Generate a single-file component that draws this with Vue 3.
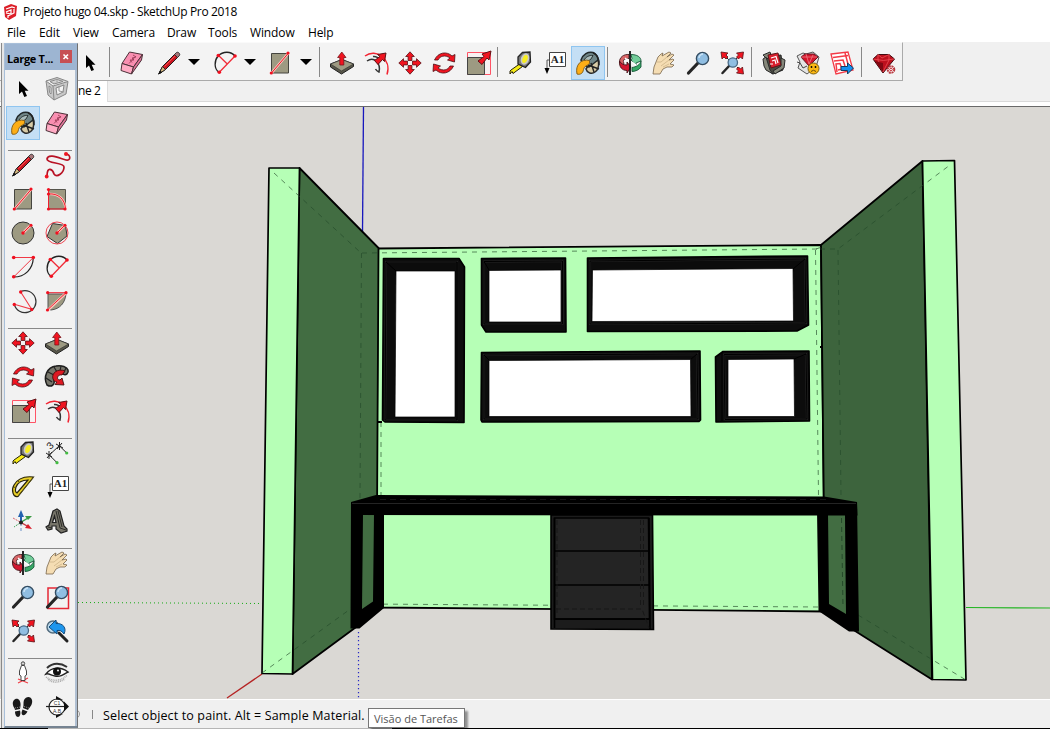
<script setup>
const menus = ['File', 'Edit', 'View', 'Camera', 'Draw', 'Tools', 'Window', 'Help']

const toolbar = [
  'pointer', '|', 'eraser', 'pencil', 'v1', 'arc2', 'v2', 'rect', 'v3', '|',
  'pushpull', 'offset', 'move', 'rotate', 'scale', '|',
  'tape', 'text', 'paint', '|',
  'orbit', 'hand', 'zoom', 'extents', '|',
  'warehouse', 'extension', 'layout', '|', 'ruby'
]

const groups = [
  ['pointer', 'component', 'paint', 'eraser'],
  ['pencil', 'freehand', 'rect', 'rotrect', 'circle', 'polygon', 'arc', 'arc2', 'arc3', 'pie'],
  ['move', 'pushpull', 'rotate', 'follow', 'scale', 'offset'],
  ['tape', 'dimension', 'protractor', 'text', 'axes', 'text3d'],
  ['orbit', 'hand', 'zoom', 'zoomwin', 'extents', 'previous'],
  ['camera', 'eye', 'feet', 'section']
]

// Lettering that sits on top of an icon
const labels = { text: 'A1', dimension: '3' }

const shelves = [
  { outer: '383.500,258.500 459,258.500 464.500,267 464,422.500 385,422 382.500,420', frame: '386,262 457,262 457,420 385,420', edge: 'M386 262L396 271M457 262V420', white: '396,271 455,271 455,417 395,417' },
  { outer: '481.500,258.500 565.500,258 566,332 486,332 481.500,325', frame: '484,261.500 562.500,261 562.500,324 484,324', edge: 'M484 261.500L489 270', white: '489,270.500 561,270 561,322 489,322' },
  { outer: '587.500,258 807.500,256 808.500,325 797,331 587.500,331.500', frame: '590,261 805,259 806,323 590,324', edge: 'M805 259L793 269', white: '592.500,270 793,268.500 793.500,321 592,321.500' },
  { outer: '481.500,352.500 700,351 700.500,420 699,421.500 482,422 481,420', frame: '484,355 697,354 698,419 484,419', edge: 'M484 355L489 360M697 354L690 360', white: '489,360.500 690.500,359.500 691,416.500 489,416.500' },
  { outer: '715.500,357 723,351.500 809,351 809.500,421 716,422', frame: '724,354.500 806,354 807,419 725,419.500', edge: 'M806 354L794 359M722 352V421', white: '728,359.500 794,359 794.500,416.500 728,416.500' }
]
</script>

<template>
  <div class="app">
    <svg class="defs" width="0" height="0">
      <symbol id="pointer" viewBox="0 0 34 34"><path d="M13 9V22L16 19.500L18.300 25L21 24L18.700 18.700H22.500Z" fill="#000" /></symbol>
      <symbol id="component" viewBox="0 0 34 34">
        <path d="M6 9L17 5.500L28 9.500L26 22L14 28L8 23Z" fill="#c9c9c9" stroke="#888" />
        <path d="M6 9L13 14L28 9.500M13 14L14 28M10 9.500L17 7.500L23 9.500L14 12ZM16 16L24 13L23 20L17 23ZM9 14L11 15.500V22L9.500 20.500Z" fill="#f4f4f4" stroke="#888" />
        <path d="M19 14V19L24 20M17 7V10" fill="none" stroke="#999" />
      </symbol>
      <symbol id="paint" viewBox="0 0 34 34">
        <path d="M17 20L26 13L27.500 16C28 20 27 24 24 26C21 28.500 16 27 15 23Z" fill="#d8cba6" stroke="#2b2b2b" stroke-width="1.500" />
        <path d="M10 14C12 8 17 5.500 22 6.500C25 8 27 11 27 14L18 21C14 20 11 18 10 14Z" fill="#6f8587" stroke="#20282a" stroke-width="1.500" />
        <path d="M13 14C15 11 18 9 22 9.500L20 13L16 16Z" fill="#a9bcbc" stroke="#2b3535" />
        <path d="M22 7C26 8 29 14 28 19M17 19L28 23M20 17L23 26" fill="none" stroke="#222" stroke-width="1.400" />
        <path d="M18.500 14.500C10 12.500 4 19 6 28C9 29 12 27.500 12.500 23.500C13 20 16 20 18.500 17.500Z" fill="#fdae16" stroke="#8a6219" />
      </symbol>
      <symbol id="eraser" viewBox="0 0 34 34">
        <g stroke="#4b3038" stroke-linejoin="round">
          <path d="M14.500 6L27.500 8.500L18.500 21L7 17.500Z" fill="#f98fb1" />
          <path d="M7 17.500L18.500 21L16.500 28L6 24.500Z" fill="#ffabc4" />
          <path d="M27.500 8.500L26.500 14L16.500 28L18.500 21Z" fill="#e07599" />
        </g>
        <path d="M21 10L14 17.500M18 9L21 11L17 12L19 14L15 14L17 16.500" stroke="#9f3f5b" stroke-width=".9" fill="none" />
      </symbol>
      <symbol id="pencil" viewBox="0 0 34 34">
        <path d="M10.500 20.500L23.500 7.500L26.500 10.500L13.500 23.500L6.700 28Z" fill="#cc1520" stroke="#1e1e1e" />
        <path d="M10.500 20.500L13.500 23.500L6.700 28Z" fill="#d2b67f" stroke="#222" stroke-width=".9" />
        <path d="M6.500 28.300L8 24.500L10.300 26.500Z" fill="#111" />
        <path d="M22.500 8.500L24.500 6.500C26 5.500 28.500 7.500 27.500 9.500L25.500 11.500Z" fill="#a7767a" stroke="#333" />
        <path d="M12.500 20.500L23 10" stroke="#f8504e" />
      </symbol>
      <symbol id="freehand" viewBox="0 0 34 34">
        <path d="M26 6C31 7 31 13 26 12C19 10 8 5 7 11C7 16 24 14 24 19C24 25 17 30 14 26C13 22 7 17 7 28" fill="none" stroke="#b81224" stroke-width="1.700" />
        <circle cx="26" cy="6" r="2" fill="#f01520" /><circle cx="6.700" cy="28.500" r="1.900" fill="#f01520" />
      </symbol>
      <symbol id="rect" viewBox="0 0 34 34">
        <path d="M8.500 7.500H25.500V27H8.500Z" fill="#9d9a82" stroke="#45453f" />
        <path d="M8.500 27L25.500 7" stroke="#ffc5bd" stroke-width="2.600" /><path d="M8.500 27L25.500 7" stroke="#e71928" />
        <circle cx="25" cy="7" r="1.600" fill="#f01020" /><circle cx="8.300" cy="27" r="1.600" fill="#f01020" />
      </symbol>
      <symbol id="rotrect" viewBox="0 0 34 34">
        <path d="M8.500 7.500H25.500V27H8.500Z" fill="#9d9a82" stroke="#55554c" />
        <path d="M8.500 12C18 11 25 17 25.500 27" fill="none" stroke="#ffc5bd" stroke-width="2.500" />
        <path d="M8.500 7V27H25.500M8.500 12C18 11 25 17 25.500 27" fill="none" stroke="#ed2030" />
        <g fill="#f01020"><circle cx="8.500" cy="7.500" r="1.600" /><circle cx="8.500" cy="12" r="1.600" /><circle cx="8.500" cy="27" r="1.600" /><circle cx="25" cy="27" r="1.600" /></g>
      </symbol>
      <symbol id="circle" viewBox="0 0 34 34">
        <circle cx="17" cy="17" r="11" fill="#9d9a82" stroke="#333" /><path d="M17 17L25 9" stroke="#ffb7b0" stroke-width="2.600" /><path d="M17 17L25 9" stroke="#ef1a28" />
        <circle cx="17" cy="17" r="1.700" fill="#f01020" /><circle cx="25" cy="9.300" r="1.500" fill="#f01020" />
      </symbol>
      <symbol id="polygon" viewBox="0 0 34 34">
        <path d="M12.500 7.500L25.500 9.500L27 20L17.500 27.500L7 20.500Z" fill="#9d9a82" stroke="#333" /><circle cx="17" cy="17" r="11" fill="none" stroke="#ef4450" /><path d="M17 17L25 9" stroke="#ffb7b0" stroke-width="2.600" /><path d="M17 17L25 9" stroke="#ef1a28" />
        <circle cx="17" cy="17" r="1.700" fill="#f01020" /><circle cx="25" cy="9.300" r="1.500" fill="#f01020" />
      </symbol>
      <symbol id="arc" viewBox="0 0 34 34">
        <path d="M27.300 7.500C27 19 19 27 7.700 27" fill="none" stroke="#222" stroke-width="1.200" /><path d="M7.700 7.500H27.300L7.700 27" fill="none" stroke="#f03945" />
        <g fill="#f01020"><circle cx="7.700" cy="7.500" r="1.800" /><circle cx="27.300" cy="7.500" r="1.800" /><circle cx="7.700" cy="26.700" r="1.800" /></g>
      </symbol>
      <symbol id="arc2" viewBox="0 0 34 34">
        <path d="M11 26.300C6 23 6 15 10 10C15 5 23 5 27 10" fill="none" stroke="#222" stroke-width="1.300" /><path d="M27 10L11.300 26.300M10.300 9.300L19.300 18" stroke="#f02c38" stroke-width="1.300" />
        <g fill="#f01020"><circle cx="10.300" cy="9.500" r="1.800" /><circle cx="27" cy="10" r="1.800" /><circle cx="11.300" cy="26.300" r="1.800" /></g>
      </symbol>
      <symbol id="arc3" viewBox="0 0 34 34">
        <path d="M14.700 7.500A11 11 0 1 1 8.300 20.300" fill="none" stroke="#333" stroke-width="1.200" /><path d="M14.700 8L25.700 25.300L8.300 20.300" fill="none" stroke="#f03945" stroke-width="1.100" />
        <g fill="#f01020"><circle cx="14.700" cy="8" r="1.700" /><circle cx="8.300" cy="20.500" r="1.700" /><circle cx="25.700" cy="25.500" r="1.700" /></g>
      </symbol>
      <symbol id="pie" viewBox="0 0 34 34">
        <path d="M8 10H26C25 19 20 25 11 26L8 25Z" fill="#9d9a82" stroke="#555" /><path d="M26 9L8 26" stroke="#ffc5bd" stroke-width="2.600" /><path d="M7.700 8.700H26L7.300 26" fill="none" stroke="#ed2030" />
        <g fill="#f01020"><circle cx="7.700" cy="8.700" r="1.600" /><circle cx="26" cy="8.700" r="1.600" /><circle cx="7.500" cy="26" r="1.600" /></g>
      </symbol>
      <symbol id="move" viewBox="0 0 34 34">
        <g fill="#f01420" stroke="#5b1116" stroke-width=".8">
          <path id="mv" d="M17 5.800L21.300 10.500H18.900V14.500H15.100V10.500H12.700Z" /><use href="#mv" transform="rotate(90 17 17)" /><use href="#mv" transform="rotate(180 17 17)" /><use href="#mv" transform="rotate(270 17 17)" />
        </g>
      </symbol>
      <symbol id="pushpull" viewBox="0 0 34 34">
        <path d="M5.500 18L17 13.500L28.500 18V20.500L16.500 28L5.500 21Z" fill="#58574a" stroke="#202020" /><path d="M5.500 18L17 13.500L28.500 18L16.500 25Z" fill="#9d9a82" stroke="#333" stroke-width=".7" />
        <path d="M16.800 6L21 11.500H18.800V19H14.800V11.500H12.600Z" fill="#f01420" stroke="#79151b" stroke-width=".8" />
      </symbol>
      <symbol id="rotate" viewBox="0 0 34 34">
        <g fill="#f01420" stroke="#4e1015" stroke-width=".8">
          <path id="ro" d="M7.500 14C11 6 20 5 25 10L28 8.500L27.500 16L20.500 14L23 12C18 8.500 13 10 11 14Z" /><use href="#ro" transform="rotate(180 17 17)" />
        </g>
      </symbol>
      <symbol id="follow" viewBox="0 0 34 34">
        <path d="M7 25C3 17 7 7 16 6C22 5 27 7 28 10C29 13 26 16 23 14C17 11 13 15 14 20C15 24 12 28 7 25Z" fill="#77766b" stroke="#1d1d1d" stroke-width="1.500" />
        <path d="M6 18L12 22M8 12L14 15M14 7L17 12M21 6L20 11M26 8L23 14" stroke="#222" stroke-width="1.200" />
        <path d="M25 11C18 8 11 13 13 19C14 21 15 22 17 22L15 24.500L24 25L22 18L20 20C16 20 17 14 22 15Z" fill="#df1923" stroke="#411" stroke-width=".9" />
      </symbol>
      <symbol id="scale" viewBox="0 0 34 34">
        <path d="M6.500 6.500H29.500V28.500H6.500Z" fill="#f8f1f1" stroke="#ff5365" /><path d="M6.500 11.500H23.500V28.500H6.500Z" fill="#9d9a82" stroke="#444" />
        <path d="M17 15L23 10.500L21 8L30 5L28 14L26 12L21 18.500Z" fill="#f01420" stroke="#611115" />
      </symbol>
      <symbol id="offset" viewBox="0 0 34 34">
        <path d="M6 10C17 2 33 13 28 28.500" fill="none" stroke="#f22432" stroke-width="1.500" /><path d="M8 15C15 10 22 17 20 26C18 25 17 24 16.500 23M14 10.500C17 10 20 12 21 14" fill="none" stroke="#333" stroke-width="1.500" />
        <path d="M15.500 14.500L21 10.500L18.500 8.500L27 7L25.500 15.500L23.500 13.500L19 18.500Z" fill="#f01420" stroke="#611115" />
      </symbol>
      <symbol id="tape" viewBox="0 0 34 34">
        <path d="M8 24L16.500 18L19.500 20.500L10 27.500L9 25.500L7 28V25Z" fill="#f9ed16" stroke="#26230a" /><path d="M15 11L19.500 6.500L27 6L27.500 16L22.500 21.500L15 18Z" fill="#777" stroke="#222" stroke-width="1.300" />
        <ellipse cx="22" cy="13" rx="3.300" ry="5" fill="#f7ed20" stroke="#c8c8c8" stroke-width="1.600" transform="rotate(20 22 13)" />
      </symbol>
      <symbol id="dimension" viewBox="0 0 34 34">
        <path d="M9.300 19L19.300 9.700L26.700 17M9.300 19L17 26.700M6 17L12 21M7 22L12 16M9 15V23M16 8L23 12M17 13L22 7M19.500 6V14" fill="none" stroke="#222" />
        <circle cx="26.700" cy="17" r="1.600" fill="#43bd42" /><circle cx="17" cy="26.700" r="1.600" fill="#43bd42" />
      </symbol>
      <symbol id="protractor" viewBox="0 0 34 34">
        <path fill-rule="evenodd" d="M27.500 7L12 26.500C7 28 5 20 8 15C12 8 19 6 27.500 7ZM22 10C16 10 12 12 10 17C9 20 9 22 11 23Z" fill="#e8cf27" stroke="#28230b" stroke-width="1.200" />
        <path d="M27 8L12 26M8 17L10 18M12 11L14 13" stroke="#5d5312" />
      </symbol>
      <symbol id="text" viewBox="0 0 34 34">
        <path d="M12.500 6.500H28.500V20.500H12.500Z" fill="#fff" stroke="#444" /><path d="M12 14H10V24" fill="none" stroke="#555" /><path d="M7.500 22H12.500L10 28Z" fill="#000" />
      </symbol>
      <symbol id="axes" viewBox="0 0 34 34">
        <path d="M14.700 18.300L22 14" stroke="#39a34a" stroke-width="1.400" /><path d="M26 12L19 12L22 16Z" fill="#3b9a44" /><path d="M14.700 18.300L22 22.500" stroke="#c83b43" stroke-width="1.400" /><path d="M26 25L19 24L22 20Z" fill="#d91e2b" /><path d="M15 18V9" stroke="#2362af" stroke-width="2" /><path d="M15 6L12 13H18Z" fill="#2362af" />
        <path d="M14 18L7 14" stroke="#d85b65" stroke-dasharray="2 1" /><path d="M14 19L8 23" stroke="#44a55d" stroke-dasharray="2 1" /><path d="M15 19V28" stroke="#6a91c8" stroke-dasharray="3 2" /><circle cx="15" cy="18.500" r="2" fill="#222" />
      </symbol>
      <symbol id="text3d" viewBox="0 0 34 34">
        <path fill-rule="evenodd" d="M13 7L17 5L20 7L24 22L27 25V27L21 29L16 25V22H12V25L8 26L6 23L9 21ZM14.500 12L12.500 18.500H16Z" fill="#77756a" stroke="#222" stroke-width="1.200" /><path d="M16 7L20 24L26 26M8 23L12 24M18 7L22 23" fill="none" stroke="#2c2c28" />
      </symbol>
      <symbol id="orbit" viewBox="0 0 34 34">
        <path d="M6.500 17C6 11 11 8 16 8.500V12.500C12 12 9 14 11 17L10 20Z" fill="#d86567" stroke="#481b1e" stroke-width=".9" /><path d="M18 8.500C24 8.500 28 11 28 15L23 17V19L18 14L19 12.500Z" fill="#73cd9a" stroke="#19583a" stroke-width=".9" /><path d="M28 15V21C26 24 22 25.500 19 25.500V21.500C23 21 27 19 28 15Z" fill="#37a865" stroke="#19583a" stroke-width=".9" />
        <path d="M12 12L16 15M11 16L15 13M19 16L23 19" stroke="#fff" stroke-width="1.500" /><path d="M6.500 15C8 18 11 19 14 19V16L18 21L14 27V24.500C9 24.500 6 21 6.500 15Z" fill="#d31730" stroke="#45151b" stroke-width=".9" /><path d="M17 5V29" stroke="#111" stroke-width="1.800" />
      </symbol>
      <symbol id="hand" viewBox="0 0 34 34">
        <path d="M6 28L7 21L11 11L14 8L16 7L15 10L22 6L24 7L20 11L25 8L27 9L22 14L26 13L27 14L23 18L27 19L25 21L20 21L16 23L13 28Z" fill="#f5ddb3" stroke="#79664b" stroke-width=".8" /><path d="M10 16L14 16L20 11M14 20L22 14M16 21L22 18" stroke="#cdb488" stroke-width=".8" fill="none" />
      </symbol>
      <symbol id="zoom" viewBox="0 0 34 34"><path d="M17 17L7.500 27" stroke="#252525" stroke-width="3.200" stroke-linecap="round" /><circle cx="21.500" cy="12.500" r="6.100" fill="#90bee2" stroke="#344d62" stroke-width="1.400" /><path d="M18 12C18 10 20 8 22 8" fill="none" stroke="#c9e3f6" stroke-width="1.500" /></symbol>
      <symbol id="zoomwin" viewBox="0 0 34 34"><path d="M8 8H28.500V28.500H8Z" fill="none" stroke="#e52836" stroke-width="1.500" /><use href="#zoom" width="34" height="34" /></symbol>
      <symbol id="extents" viewBox="0 0 34 34">
        <path d="M15 19L7.500 27" stroke="#252525" stroke-width="2.500" stroke-linecap="round" /><path d="M10 10L14 14M24 10L21 13M22 21L25 24" stroke="#222" /><circle cx="17.800" cy="16.500" r="4.700" fill="#90bee2" stroke="#486984" stroke-width="1.300" />
        <g fill="#f01420" stroke="#591015" stroke-width=".8"><path id="exa" d="M6 6L13 7L11 9L13 11L11 13L9 11L7 13Z" /><use href="#exa" transform="matrix(-1 0 0 1 34.500 0)" /><use href="#exa" transform="matrix(-1 0 0 -1 34.500 34)" /></g>
      </symbol>
      <symbol id="previous" viewBox="0 0 34 34"><circle cx="13" cy="13" r="6" fill="#b9d8eb" stroke="#526b7d" stroke-width="1.500" /><path d="M19 19L27 27" stroke="#222" stroke-width="3" stroke-linecap="round" /><path d="M9 13L16 6V9.500C23 9 27 14 24 20C22 17 20 16 17 16.500V20Z" fill="#1e96ed" stroke="#154c7c" /></symbol>
      <symbol id="camera" viewBox="0 0 34 34"><path d="M12 27L22 22M12 23L22 27" stroke="#f04048" stroke-width="1.200" /><circle cx="17" cy="7.500" r="1.700" fill="#ddd" stroke="#444" /><path d="M15.500 9.500H18.500L20.500 15V19L19 20V24.500H15V20L13.500 19V15Z" fill="#fff" stroke="#333" stroke-width=".9" /></symbol>
      <symbol id="eye" viewBox="0 0 34 34"><path d="M7 12C13 6 21 7 27 11" fill="none" stroke="#333" stroke-width="2" /><path d="M6 18C12 10 21 11 28 16C23 19 20 21 15 20C12 20 9 17 6 18Z" fill="#fff" stroke="#222" stroke-width="1.500" /><circle cx="17" cy="15.500" r="4" fill="#101010" /><circle cx="18" cy="14.500" r="1.100" fill="#ddd" /><path d="M6 21C13 26 22 25 27 19M8 23.500C14 28 20 26 25 23" stroke="#aaa" stroke-width="1.500" stroke-dasharray="1 .8" fill="none" /></symbol>
      <symbol id="feet" viewBox="0 0 34 34">
        <path d="M7 15C6 11 9 8 12 9C15 11 15 15 14 19L9 20C9 18 7 17 7 15ZM9 21.500L14 20.500C15 24 14 27 12 27C10 27 9 24 9 21.500Z" fill="#191919" />
        <path d="M18 10C20 6 25 6 26 10C27 14 24 17 22 20L17 18C18 15 17 13 18 10ZM16.500 19.500L21.500 21.500C20 25 17 26 16 24.500C15 23 16 21 16.500 19.500Z" fill="#191919" />
        <path d="M9 18L14 17M18 16.500L23 18" stroke="#888" stroke-dasharray="1 1" />
      </symbol>
      <symbol id="section" viewBox="0 0 34 34"><circle cx="17" cy="17" r="8" fill="#fff" stroke="#222" stroke-width="1.200" /><path d="M6 16.500H26" stroke="#222" stroke-width="1.200" /><path d="M24 11.500L29 16.500L24 21.500ZM16 6L23 10L16 9.500ZM16 28L23 24L16 25Z" fill="#111" /></symbol>
      <symbol id="warehouse" viewBox="0 0 34 34">
        <path d="M8 11L24 9L26 24L16 28L9 23Z" fill="#4a4c43" stroke="#222" /><path d="M6 13L9 11L13 24L16 28L9 24L7 20ZM24 12L28 14L27 22L18 28L16 25L24 20ZM6 9L13 6L14 9L10 13Z" fill="#85877a" stroke="#292929" /><path d="M11 9L21 7L24 19L14 22Z" fill="#d71f2d" stroke="#5c1719" /><path d="M14 12L19 10.500L21 17M15 15L18 14L19 18M13 18H16" fill="none" stroke="#fff" stroke-width="1.200" />
      </symbol>
      <symbol id="extension" viewBox="0 0 34 34">
        <path d="M6 10L12 7L15 8L22 6L28 11L25 21L16 28L7 22L9 16Z" fill="#e4e4e4" stroke="#555" /><path d="M10 11L14 8H23L27 11L18 20Z" fill="#d5142a" stroke="#681522" /><path d="M10 11H26M15 8L18 18L22 9" fill="none" stroke="#ed7b83" stroke-width=".8" /><path d="M6 16L9 17L12 22L16 20" fill="none" stroke="#444" /><circle cx="22.500" cy="22.500" r="5.500" fill="#fbb813" stroke="#795f14" /><circle cx="20.500" cy="21" r=".9" /><circle cx="24.500" cy="21" r=".9" /><path d="M20 25.500Q22.500 23 25 25.500" fill="none" stroke="#684c0e" />
      </symbol>
      <symbol id="layout" viewBox="0 0 34 34">
        <path d="M6 8L23 6L28 24L11 28Z" fill="#fff" stroke="#f33a46" stroke-width="1.300" /><path d="M8 11.500L23 9.500M20 7L23 18M9 15L18 14L20 20M12 26L11 18L15 17.500L17 23L13 24" fill="none" stroke="#f33a46" stroke-width="1.500" /><path d="M16 20.500H22.500V17L28.500 22L22.500 28V24.500H16Z" fill="#1690ef" stroke="#123c60" />
      </symbol>
      <symbol id="ruby" viewBox="0 0 34 34"><path d="M6 13L11 8.500H22L27.500 13L16 27Z" fill="#bd101d" stroke="#420a10" /><path d="M6 13Q16 16 27 13M11 8.500L11 14L16 26L22 14V8.500L15 12Z" fill="none" stroke="#ed4e56" stroke-width=".8" /><path d="M8 15L16 26V17Z" fill="#800812" /><circle cx="24" cy="23.500" r="3.300" fill="#fff" stroke="#b93a40" stroke-width="2" stroke-dasharray="2 .6" /><circle cx="24" cy="23.500" r="1.300" fill="none" stroke="#c73039" /></symbol>
    </svg>

    <header class="titlebar">
      <svg width="15" height="16" viewBox="0 0 15 16"><path d="M1 3L8 0L14 2L13 12L6 16L2 13Z" fill="#dc1e28" /><path d="M3 5L9 3L12 4M3 8L8 6V10L3 9M5 12L11 9V5M5 14V11" fill="none" stroke="#fff" stroke-width="1.200" /></svg>
      <span>Projeto hugo 04.skp - SketchUp Pro 2018</span>
    </header>
    <nav class="menubar"><span v-for="m in menus" :key="m">{{ m }}</span></nav>
    <div class="toolrow">
      <div class="toolbar">
        <template v-for="(t, i) in toolbar" :key="i">
          <i v-if="t === '|'" class="sep"></i>
          <i v-else-if="t[0] === 'v'" class="drop" :class="t"></i>
          <span v-else class="tool" :class="[t, { active: t === 'paint' }]"><svg><use :href="'#' + t" /></svg><b v-if="labels[t]" class="label">{{ labels[t] }}</b></span>
        </template>
      </div>
    </div>
    <div class="tabs"><span class="tab">ne 2</span></div>
    <main class="viewport">
      <svg class="scene" viewBox="0 107 1050 592">
        <path d="M363.500 107L362.500 232" stroke="#1717bd" stroke-width="1.300" />
        <path d="M358.500 632V698" stroke="#2727c5" stroke-width="1.200" stroke-dasharray="1.200 2.800" />
        <path d="M78 602.500L262 603.500" stroke="#12aa12" stroke-dasharray="1 3" /><path d="M966 607.500L1050 608" stroke="#24b524" stroke-width="1.200" />
        <path d="M262 674L227 698" stroke="#b52323" stroke-width="1.300" />
        <g stroke="#000" stroke-width="1.800" stroke-linejoin="round">
          <path d="M378 248.500L821 245L825 611.500L376 607.500Z" fill="#b6ffb6" />
          <path d="M299.500 168L378.500 248L376.500 612L292.500 674Z" fill="#426d42" />
          <path d="M922.500 161L821 245L825 612L932 679.500Z" fill="#3d643d" />
        </g>
        <path d="M269 168L299.500 168L292.500 674L262 673.500Z" fill="#b6ffb6" stroke="#000" stroke-width="1.700" stroke-linejoin="round" />
        <path d="M922.500 161L954.500 160.500L966 680L932.500 679.500Z" fill="#b6ffb6" stroke="#000" stroke-width="1.700" stroke-linejoin="round" />
        <g fill="none" stroke="#24492a" stroke-dasharray="5 5" opacity=".65">
          <path d="M274 173L360 252M361.500 253L360 498M362 253L820 249M815.500 250L818.500 495M816 249L822 247M838 250L841 495M381 422V495M262 673L349 610M363 604L820 607M858 615L966 680M820 249H838L950 165" />
        </g>
        <path d="M377 422H382M820 347H822" stroke="#000" stroke-width="2" />
        <g v-for="(s, i) in shelves" :key="i" stroke-linejoin="round">
          <polygon :points="s.outer" fill="#0d0d0d" stroke="#000" stroke-width="1.600" /><polygon :points="s.frame" fill="#0c0c0c" stroke="#242424" stroke-width="2.200" /><polygon :points="s.frame" fill="none" stroke="#000" /><path :d="s.edge" stroke="#000" /><polygon :points="s.white" fill="#fff" stroke="#000" stroke-width=".7" />
        </g>
        <path d="M363 515H374L373 601.500L362 609ZM828 515H845L846 614L829 604Z" fill="#426d42" />
        <path fill-rule="evenodd" d="M351 502L384 501V608L359.500 628.500H350.500ZM363 514L362 609L373 601.500L374 514Z" fill="#000" />
        <path fill-rule="evenodd" d="M817 510L857 502L859 631.500H849L818.500 611ZM828 514L829 604L846 614L845 514Z" fill="#000" />
        <path d="M841.500 518L843 607" stroke="#25492a" stroke-dasharray="5 4" />
        <path d="M351 502L376 495L824 496.500L857 502L857.500 515.500L351 515Z" fill="#000" />
        <path d="M352 503.500H856" stroke="#242424" /><path d="M380 499.500H830" stroke="#161616" stroke-dasharray="6 4" />
        <g stroke="#000" stroke-width="1.600"><path d="M551 515H652.500L653.500 629.500L551 629Z" fill="#1c1c1c" /><path d="M554.500 518H648.500L649.500 619H554.500Z" fill="#242424" /><path d="M554 551H649M554 585H649M554 619H650M554.500 518V628M649 518L650 629" /></g>
        <path d="M557 520V616M640.500 520V607M643.500 520V607M556 609H642L649 628" fill="none" stroke="#171717" stroke-dasharray="5 3" />
      </svg>
    </main>
    <footer class="status">
      <i class="ring"></i><i class="bar"></i><span class="message">Select object to paint. Alt = Sample Material.</span>
      <div class="tooltip">Visão de Tarefas</div>
    </footer>

    <aside class="palette">
      <div class="palette-title"><b>Large T...</b><span class="close"><svg viewBox="0 0 8 8"><path d="M1.500 1.500L6 6M6 1.500L1.500 6" stroke="#fff" stroke-width="1.600" /></svg></span></div>
      <div v-for="(g, i) in groups" :key="i" class="group">
        <span v-for="t in g" :key="t" class="tool" :class="[t, { active: t === 'paint' }]">
          <svg><use :href="'#' + t" /></svg>
          <b v-if="labels[t]" class="label">{{ labels[t] }}</b>
          <b v-if="t === 'section'" class="mark"><span>C1</span><span>A.B</span></b>
        </span>
      </div>
    </aside>
  </div>
</template>

<style>
body { margin: 0; overflow: hidden; }
</style>
<style scoped>
.app { position: relative; width: 1050px; height: 729px; display: flex; flex-direction: column; overflow: hidden; background: #f0f0f0; color: #000; font: 12px "Open Sans", "Noto Sans", sans-serif; box-sizing: border-box; }
.app *, .app { box-sizing: border-box; }
.defs { position: absolute; }
.titlebar { height: 23px; flex: none; background: #fff; display: flex; align-items: center; gap: 5px; padding: 0 0 0 3px; letter-spacing: -.35px; white-space: nowrap; }
.menubar { height: 19px; flex: none; background: #fff; display: grid; grid-template-columns: 32px 34px 39px 55px 41px 42px 58px 40px; padding-left: 7px; line-height: 19px; letter-spacing: -.12px; }
.toolrow { height: 39px; flex: none; }
.toolbar { width: 903px; height: 39px; padding: 3px 0 0 73px; display: flex; background: #f3f3f3; border-top: 1px solid #fafafa; border-right: 1px solid #aaa; border-bottom: 1px solid #aaa; }
.tool { position: relative; width: 34px; height: 34px; flex: none; display: block; }
.tool svg { width: 34px; height: 34px; display: block; }
.tool.active { background: #c4dff5; border: 1px solid #8fc5f0; }
.tool.active svg { margin: -1px; }
.toolbar .pencil { margin-left: 3px; }
.toolbar .arc2 svg { margin-left: -1px; }
.label { position: absolute; left: 13px; top: 7px; width: 15px; height: 13px; text-align: center; font: bold 11px/13px "Liberation Serif", serif; color: #222; }
.dimension .label { left: 5px; top: 4px; width: 10px; height: 11px; font: 10px/11px "Liberation Sans", sans-serif; transform: rotate(-45deg); }
.mark { position: absolute; left: 11px; top: 10px; width: 12px; height: 14px; display: flex; flex-direction: column; justify-content: space-between; align-items: center; font: 5px/6px "Liberation Sans", sans-serif; color: #333; }
.sep { width: 8px; height: 30px; margin-top: 1px; flex: none; border-left: 1px solid #888; position: relative; left: 2px; }
.drop { height: 34px; padding: 13px 0 0 2px; flex: none; }
.drop::before { content: ""; display: block; width: 0; border: 6px solid transparent; border-top-color: #000; border-bottom: 0; }
.v1 { width: 23px; } .v2 { width: 20px; padding-left: 1px; } .v3 { width: 20px; padding-left: 3px; }
.tabs { height: 25px; flex: none; padding-left: 78px; border-bottom: 4px solid #fff; background: linear-gradient(#d9d9d9, #d9d9d9) 0 100% / 100% 1px no-repeat; }
.tab { display: block; width: 30px; height: 21px; background: #fff; border-right: 1px solid #ddd; line-height: 20px; letter-spacing: -.4px; }
.viewport { height: 593px; flex: none; background: #dad8d4; border-top: 1px solid #696969; }
.scene { display: block; width: 1050px; height: 592px; }
.status { height: 30px; flex: none; display: flex; align-items: flex-start; border-top: 1px solid #fff; padding-left: 70px; background: linear-gradient(90deg, #000 48px, #b5b5b5 48px, #b5b5b5 392px, #000 392px) 0 100% / 100% 1px no-repeat; }
.ring { width: 10px; height: 10px; border: 1px solid #999; border-radius: 50%; margin-top: 9px; }
.bar { width: 1px; height: 9px; margin: 10px 10px 0 12px; background: #888; }
.message { line-height: 31px; width: 265px; white-space: nowrap; font-size: 12.500px; letter-spacing: .14px; }
.tooltip { width: 97px; height: 20px; margin-top: 8px; border: 1px solid #777; background: #fff; color: #555; line-height: 19px; padding-left: 5px; font-size: 11px; white-space: nowrap; box-shadow: 3px 3px 2px #0006; }
.palette { position: absolute; left: 4px; top: 43px; width: 74px; height: 685px; background: #f2f2f2; border: 1px solid #a8bfd9; border-right: 1px solid #707070; border-bottom: 2px solid #758391; box-shadow: inset -2px 0 #afbfd2, -2px 0 #e6e6e6, -3px 0 #898989; }
.palette-title { height: 26px; background: #9db5d2; display: flex; align-items: center; justify-content: space-between; padding: 2px 4px 0 2px; font-size: 11px; white-space: nowrap; letter-spacing: -.3px; margin-bottom: 2px; }
.close { width: 12px; height: 13px; margin: -3px 1px 0 0; background: #c75054; display: grid; place-items: center; }
.close svg { width: 8px; height: 8px; }
.group { display: flex; flex-wrap: wrap; width: 68px; margin-left: 1px; position: relative; }
.group + .group { margin-top: 8px; }
.group + .group::before { content: ""; position: absolute; left: 2px; top: 2px; width: 64px; height: 1px; background: #888; }
</style>
